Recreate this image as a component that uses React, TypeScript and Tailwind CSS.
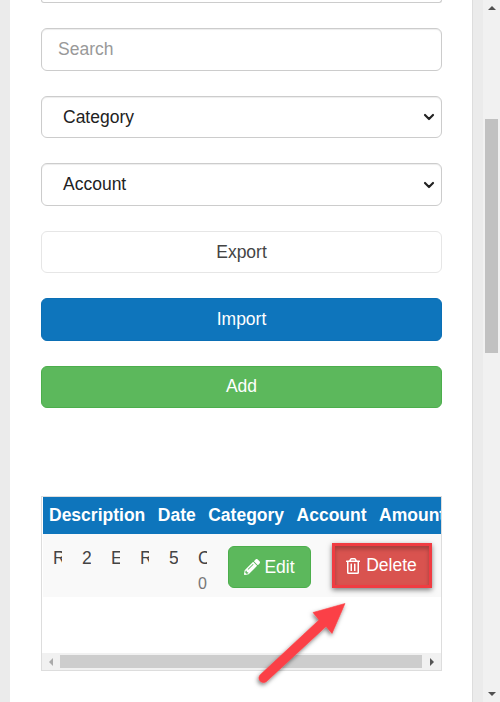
import React from "react";
import { ChevronDown } from "lucide-react";
import { FaPencilAlt, FaRegTrashAlt } from "react-icons/fa";

const font = { fontFamily: '"Liberation Sans", Arial, sans-serif' };

function Select({ label, mb }: { label: string; mb: string }) {
  return (
    <div className={`flex items-center justify-between w-[401px] border border-[#ccc] rounded-[6px] bg-white pl-[21px] pr-[4px] text-[17.5px] text-[#222] shadow-[inset_0_1px_1px_rgba(0,0,0,0.075)] ${mb}`}>
      <span>{label}</span>
      <ChevronDown size={16} strokeWidth={3.2} className="text-[#222]" />
    </div>
  );
}

function Cell({ a, b }: { a: string; b?: string }) {
  return (
    <div className="w-[9px] mr-[20px] overflow-hidden text-[#444] text-[17.5px] leading-[24px] flex flex-col shrink-0">
      <span className="h-[26px]">{a}</span>
      {b && <span className="text-[#777] text-[16px] leading-[26px]">{b}</span>}
    </div>
  );
}

export default function App() {
  return (
    <div className="relative h-[702px] w-[500px] overflow-hidden flex bg-[#ebebeb]" style={font}>
      <div className="ml-[10px] w-[463px] h-full bg-white border-r border-[#ddd] pl-[31px] flex flex-col">
        <div className="w-[401px] h-[3px] border-b border-x border-[#ccc] rounded-b-[6px] mb-[25px]" />
        <div className="w-[401px] h-[43px] border border-[#ccc] rounded-[6px] flex items-center pl-[16px] text-[17.5px] text-[#999] shadow-[inset_0_1px_1px_rgba(0,0,0,0.075)] mb-[25px]">Search</div>
        <Select label="Category" mb="h-[42px] mb-[25px]" />
        <Select label="Account" mb="h-[43px] mb-[25px]" />
        <div className="w-[401px] h-[42px] border border-[#e6e6e6] rounded-[6px] flex items-center justify-center text-[17.5px] text-[#444] mb-[25px]">Export</div>
        <div className="w-[401px] h-[43px] bg-[#0e75bc] border border-[#0b6fb5] rounded-[6px] flex items-center justify-center text-[17.5px] text-white mb-[25px]">Import</div>
        <div className="w-[401px] h-[42px] bg-[#5cb85c] border border-[#4cae4c] rounded-[6px] flex items-center justify-center pb-[2px] text-[17.5px] text-white mb-[88px]">Add</div>

        <div className="w-[401px] h-[175px] border border-[#ddd] flex flex-col bg-white">
          <div className="ml-[1px] h-[37px] bg-[#0e75bc] text-white text-[17.5px] font-bold flex items-center pl-[6px] gap-[12.5px] overflow-hidden whitespace-nowrap">
            <span>Description</span>
            <span>Date</span>
            <span>Category</span>
            <span>Account</span>
            <span>Amount</span>
          </div>
          <div className="ml-[1px] h-[63px] bg-[#f9f9f9] flex pl-[10px] pt-[12px] overflow-hidden relative">
            <Cell a="R" />
            <Cell a="2" />
            <Cell a="E" />
            <Cell a="R" />
            <Cell a="5" />
            <Cell a="C" b="0" />
            <div className="absolute left-[185px] top-[12px] w-[83px] h-[42px] bg-[#5cb85c] border border-[#4cae4c] rounded-[6px] text-white text-[17.5px] flex items-center justify-center gap-[4px]">
              <FaPencilAlt size={16} color="white" />
              <span>Edit</span>
            </div>
            <div className="absolute left-[289px] top-[9px] w-[100px] h-[45px] border-[3px] border-[#f03c42] bg-[#d9534f] text-white text-[17.5px] flex items-center justify-center gap-[5px] pr-[2px] shadow-[inset_0_3px_4px_rgba(0,0,0,0.25),0_2px_5px_rgba(0,0,0,0.5)]">
              <FaRegTrashAlt size={16} color="white" />
              <span>Delete</span>
            </div>
          </div>
          <div className="flex-1" />
          <div className="h-[17px] bg-[#f1f1f1] flex items-center">
            <div className="w-[18px] flex justify-center"><div className="w-0 h-0 border-y-[4px] border-y-transparent border-r-[4px] border-r-[#aaa]" /></div>
            <div className="w-[362px] h-[13px] bg-[#cdcdcd]" />
            <div className="flex-1 flex justify-center"><div className="w-0 h-0 border-y-[4px] border-y-transparent border-l-[4px] border-l-[#555]" /></div>
          </div>
        </div>
      </div>
      <div className="ml-[10px] w-[17px] h-full bg-[#f1f1f1] flex flex-col items-center">
        <div className="h-[119px] w-full flex justify-center pt-[6px]"><div className="w-0 h-0 border-x-[4px] border-x-transparent border-b-[4px] border-b-[#505050]" /></div>
        <div className="w-[13px] h-[234px] bg-[#c1c1c1]" />
        <div className="flex-1" />
        <div className="pb-[6px]"><div className="w-0 h-0 border-x-[4px] border-x-transparent border-t-[4px] border-t-[#505050]" /></div>
      </div>

      <svg className="absolute left-0 top-0 pointer-events-none" width="500" height="702">
        <defs>
          <filter id="s" x="-30%" y="-30%" width="160%" height="160%"><feDropShadow dx="-1" dy="2" stdDeviation="2" floodColor="#000" floodOpacity="0.5" /></filter>
        </defs>
        <path d="M345 603.5 L313 612.5 L319 620 L260.5 674.5 A4.5 4.5 0 0 0 266.5 681.5 L326 626.5 L332 633.5 Z" fill="#fb4146" stroke="#fb4146" strokeWidth="0.6" strokeLinejoin="round" filter="url(#s)" />
      </svg>
    </div>
  );
}
